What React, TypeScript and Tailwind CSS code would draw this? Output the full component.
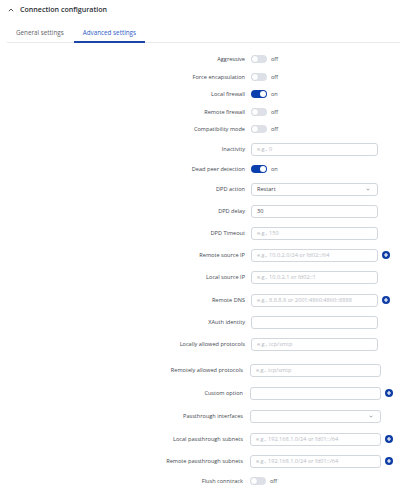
import React from "react";

type Row =
  | { kind: "toggle"; label: string; on: boolean; mt: string }
  | { kind: "input"; label: string; placeholder?: string; value?: string; plus?: boolean; mt: string }
  | { kind: "select"; label: string; value?: string; mt: string };

const Toggle = ({ on }: { on: boolean }) => (
  <div className="flex items-center">
    <div
      className={
        on
          ? "relative w-[16px] h-[8px] rounded-full bg-[#0c3fae]"
          : "relative w-[16px] h-[8px] rounded-full bg-[#dde1e7]"
      }
    >
      <div
        className={
          on
            ? "absolute top-[1px] right-[1px] w-[6px] h-[6px] rounded-full bg-white"
            : "absolute top-[0px] left-[0px] w-[8px] h-[8px] rounded-full bg-white border border-[#d3d7de]"
        }
      />
    </div>
    <span className="ml-[4px] text-[5.6px] text-[#4b5058]">{on ? "on" : "off"}</span>
  </div>
);

const Plus = () => (
  <svg width="8" height="8" viewBox="0 0 8 8" className="ml-[4px] shrink-0">
    <circle cx="4" cy="4" r="4" fill="#0f3da6" />
    <path d="M4 2v4M2 4h4" stroke="white" strokeWidth="1.2" />
  </svg>
);

const Field = ({
  row,
  labelW,
  inputW,
}: {
  row: Row;
  labelW: string;
  inputW: string;
}) => {
  return (
    <div className={`flex items-center h-[14px] ${row.mt}`}>
      <div className={`${labelW} shrink-0 text-right text-[5.6px] text-[#444951] whitespace-nowrap`}>
        {row.label}
      </div>
      {row.kind === "toggle" && <Toggle on={row.on} />}
      {row.kind === "input" && (
        <>
          <div
            className={`${inputW} h-[13px] border border-[#d2d6dd] rounded-[3px] flex items-center pl-[5px] text-[5.6px] whitespace-nowrap overflow-hidden`}
          >
            {row.value ? (
              <span className="text-[#3f444c]">{row.value}</span>
            ) : (
              <span className="text-[#b8bcc4]">{row.placeholder}</span>
            )}
          </div>
          {row.plus && <Plus />}
        </>
      )}
      {row.kind === "select" && (
        <div
          className={`${inputW} h-[13px] border border-[#d2d6dd] rounded-[3px] flex items-center justify-between pl-[5px] pr-[7px] text-[5.6px]`}
        >
          <span className="text-[#3f444c]">{row.value ?? ""}</span>
          <svg width="4" height="3" viewBox="0 0 4 3">
            <path d="M0.5 0.7L2 2.2L3.5 0.7" stroke="#8a9099" strokeWidth="0.8" fill="none" />
          </svg>
        </div>
      )}
    </div>
  );
};

const section1: Row[] = [
  { kind: "toggle", label: "Aggressive", on: false, mt: "mt-[0px]" },
  { kind: "toggle", label: "Force encapsulation", on: false, mt: "mt-[4px]" },
  { kind: "toggle", label: "Local firewall", on: true, mt: "mt-[3px]" },
  { kind: "toggle", label: "Remote firewall", on: false, mt: "mt-[4px]" },
  { kind: "toggle", label: "Compatibility mode", on: false, mt: "mt-[3px]" },
  { kind: "input", label: "Inactivity", placeholder: "e.g., 0", mt: "mt-[6px]" },
  { kind: "toggle", label: "Dead peer detection", on: true, mt: "mt-[6px]" },
  { kind: "select", label: "DPD action", value: "Restart", mt: "mt-[6px]" },
  { kind: "input", label: "DPD delay", value: "30", mt: "mt-[8px]" },
  { kind: "input", label: "DPD Timeout", placeholder: "e.g., 150", mt: "mt-[8px]" },
  { kind: "input", label: "Remote source IP", placeholder: "e.g., 10.0.2.0/24 or fd02::/64", plus: true, mt: "mt-[8px]" },
  { kind: "input", label: "Local source IP", placeholder: "e.g., 10.0.2.1 or fd02::1", mt: "mt-[8px]" },
  { kind: "input", label: "Remote DNS", placeholder: "e.g., 8.8.8.8 or 2001:4860:4860::8888", plus: true, mt: "mt-[9px]" },
  { kind: "input", label: "XAuth identity", mt: "mt-[8px]" },
  { kind: "input", label: "Locally allowed protocols", placeholder: "e.g., tcp/smtp", mt: "mt-[8px]" },
];

const section2: Row[] = [
  { kind: "input", label: "Remotely allowed protocols", placeholder: "e.g., tcp/smtp", mt: "mt-[12px]" },
  { kind: "input", label: "Custom option", plus: true, mt: "mt-[9px]" },
  { kind: "select", label: "Passthrough interfaces", mt: "mt-[9px]" },
  { kind: "input", label: "Local passthrough subnets", placeholder: "e.g., 192.168.1.0/24 or fd01::/64", plus: true, mt: "mt-[9px]" },
  { kind: "input", label: "Remote passthrough subnets", placeholder: "e.g., 192.168.1.0/24 or fd01::/64", plus: true, mt: "mt-[8px]" },
  { kind: "toggle", label: "Flush conntrack", on: false, mt: "mt-[6px]" },
];

export default function App() {
  return (
    <div
      className="w-[415px] h-[499px] bg-white overflow-hidden"
      style={{ fontFamily: "'Open Sans', 'Noto Sans', sans-serif" }}
    >
      {/* Header */}
      <div className="flex items-center h-[19px] pl-[8px]">
        <svg width="6" height="4" viewBox="0 0 6 4" className="mr-[6px]">
          <path d="M0.8 3.2L3 1L5.2 3.2" stroke="#3a3f47" strokeWidth="0.9" fill="none" />
        </svg>
        <span className="text-[7.1px] font-semibold text-[#2b2f36]">Connection configuration</span>
      </div>
      {/* Tabs */}
      <div className="mt-[5px] mx-[7px] w-[393px] flex h-[19px] border-b border-[#e9ebee]">
        <div className="px-[9px] flex items-center text-[6.3px] text-[#5f646c]">General settings</div>
        <div className="ml-[1px] px-[9px] flex items-center text-[6.3px] text-[#2f5cc8] border-b-2 border-[#1c45a8] -mb-[1px]">
          Advanced settings
        </div>
      </div>
      {/* Form */}
      <div className="mt-[9px] flex flex-col">
        {section1.map((r, i) => (
          <Field key={i} row={r} labelW="w-[245px] mr-[6px]" inputW="w-[127px]" />
        ))}
        {section2.map((r, i) => (
          <Field key={"b" + i} row={r} labelW="w-[243px] mr-[7px]" inputW="w-[131px]" />
        ))}
      </div>
    </div>
  );
}
